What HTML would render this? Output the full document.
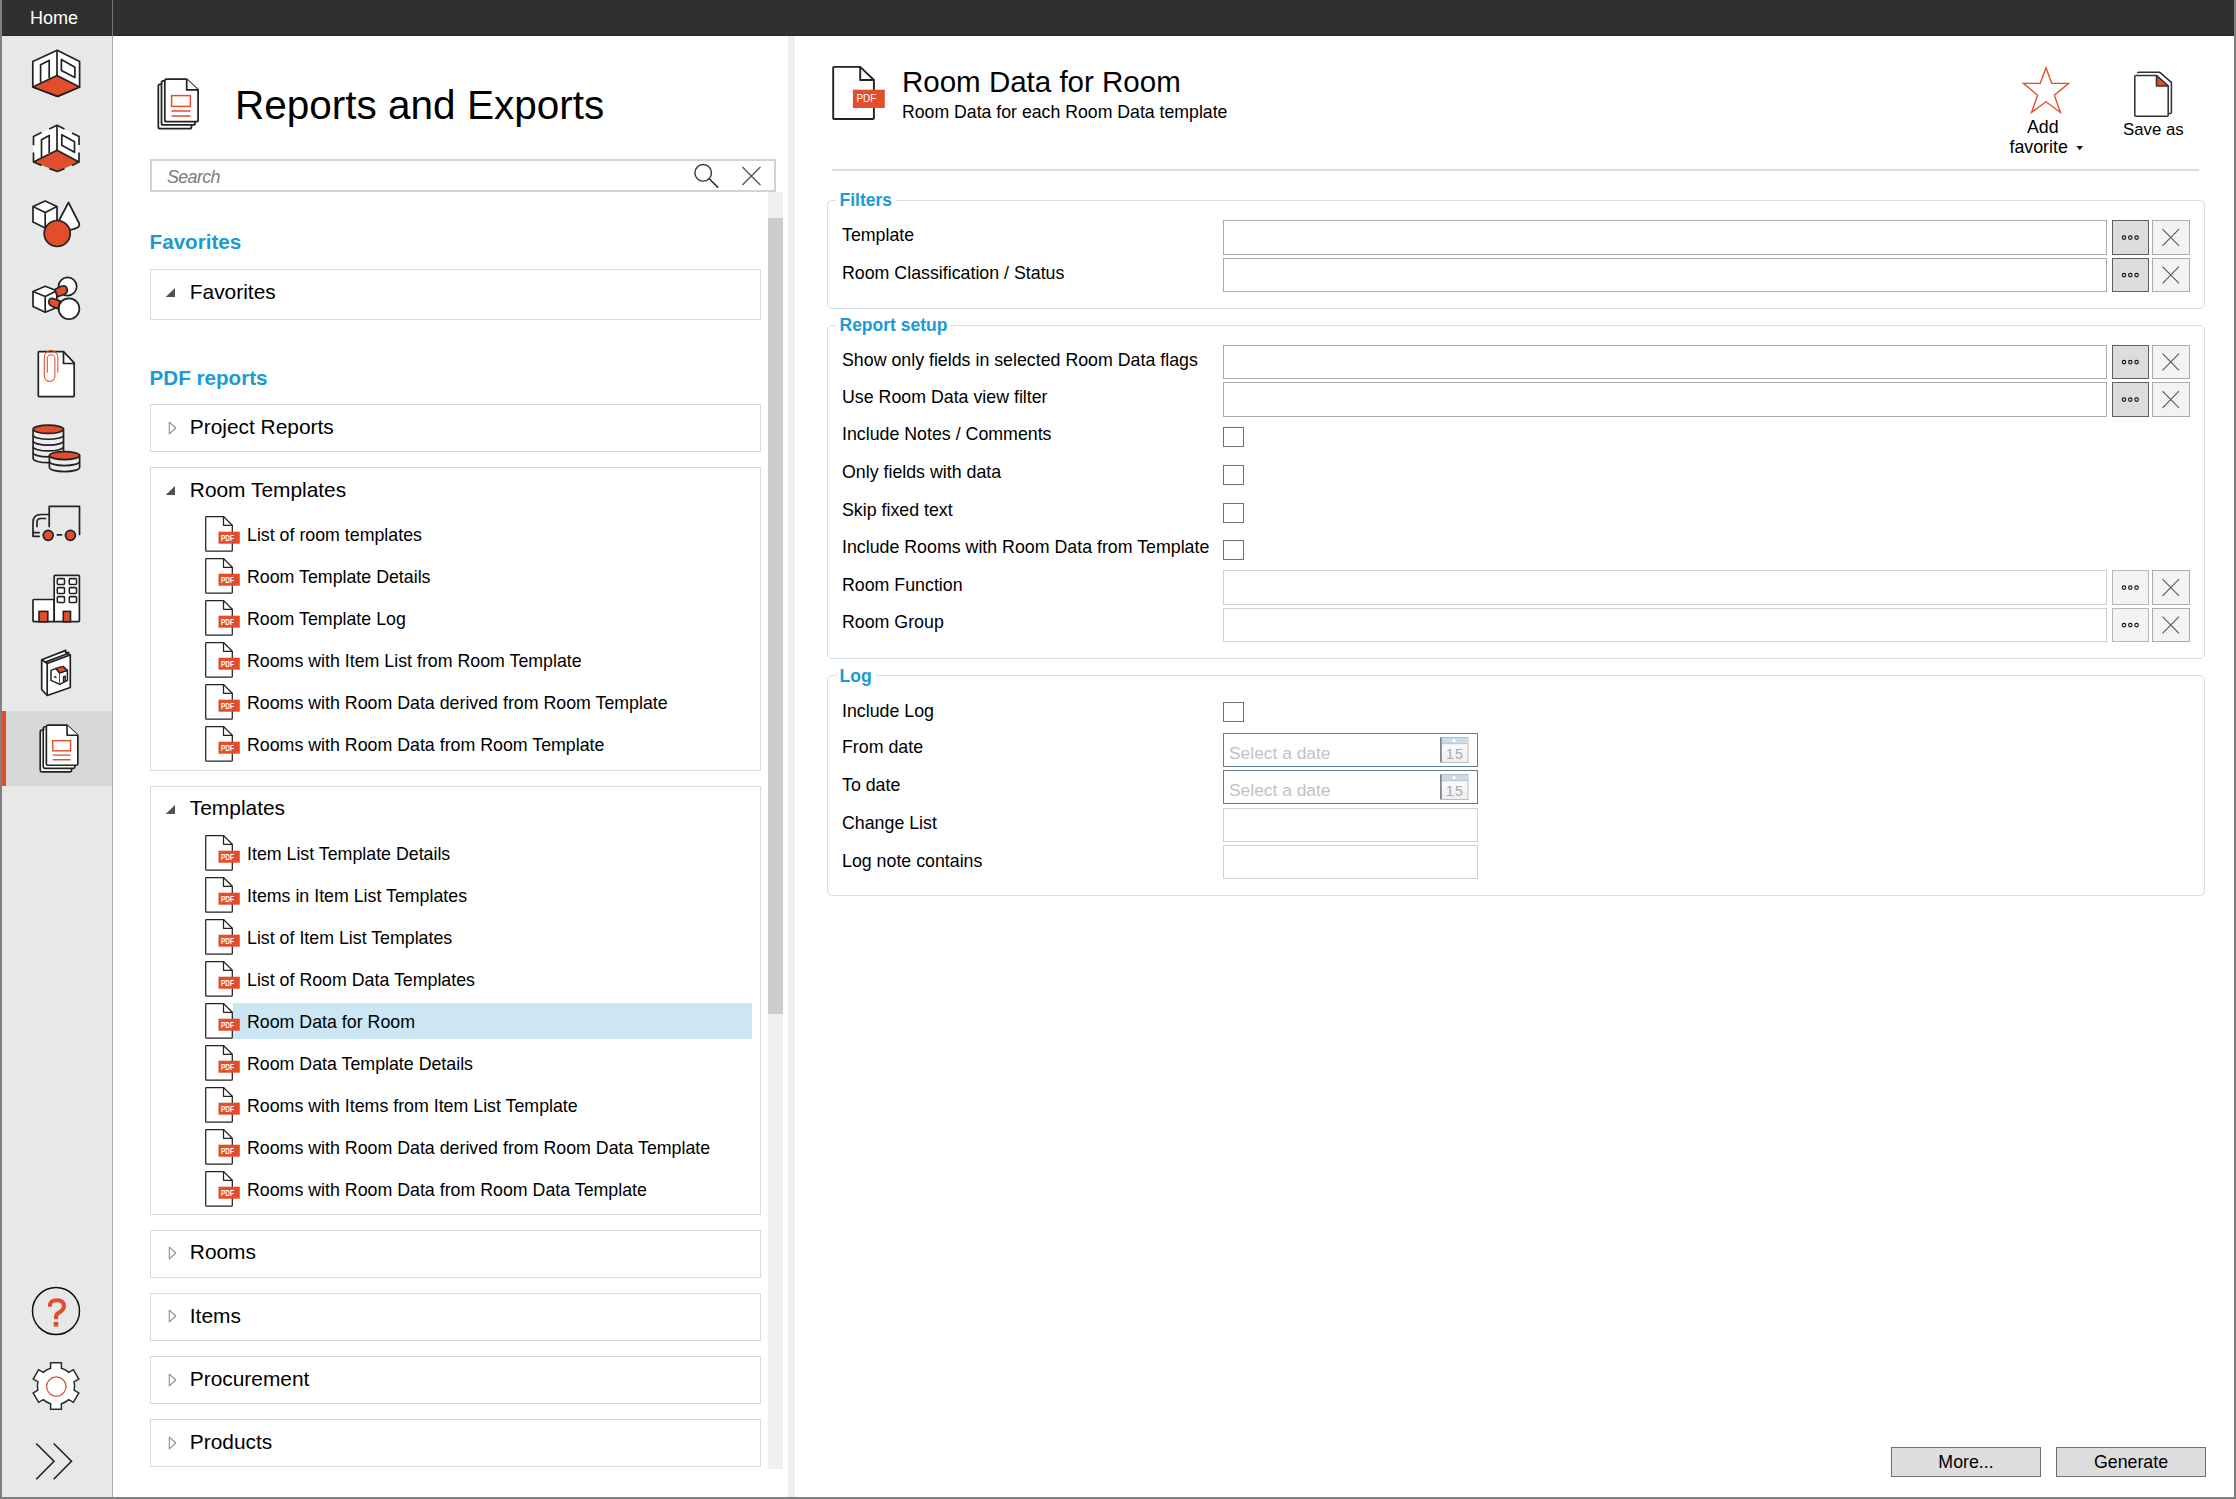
<!DOCTYPE html>
<html><head><meta charset="utf-8"><style>
*{box-sizing:border-box;margin:0;padding:0}
html,body{width:2236px;height:1499px;overflow:hidden;background:#fff;font-family:"Liberation Sans",sans-serif;color:#000}
.a{position:absolute}
.t{position:absolute;line-height:1;white-space:nowrap}
svg{position:absolute;overflow:visible}
#bl{left:0;top:0;width:2px;height:1499px;background:#808080}
#br{left:2234px;top:0;width:2px;height:1499px;background:#808080}
#bb{left:0;top:1497px;width:2236px;height:2px;background:#808080}
#top{left:2px;top:0;width:2232px;height:36px;background:#303030}
#side{left:2px;top:36px;width:110px;height:1461px;background:#e7e8e8}
#sline{left:112px;top:0;width:1px;height:1497px;background:#a9a9a9}
#split{left:788px;top:36px;width:7px;height:1461px;background:#f0f0f0}
.gbox{position:absolute;left:150px;width:611px;border:1px solid #dadada;background:#fff}
.sec{font-weight:bold;color:#1a9ad6}
.blue{color:#1a9ad6;font-weight:bold}
.inp{position:absolute;left:1223px;width:884px;border:1px solid #a9abae;background:#fff}
.inp.dis{border-color:#cfd0d2}
.bd{position:absolute;left:2112px;width:37px;border:1px solid #5f5f5f;background:#dcdcdc}
.bd.dis{border-color:#b5b8bb;background:#f3f3f3}
.bx{position:absolute;left:2152px;width:38px;border:1px solid #a9adb1;background:#f3f3f3}
.cb{position:absolute;left:1223px;width:21px;height:20px;border:1.5px solid #707070;background:#fff}
.fs{position:absolute;left:827px;width:1378px;border:1.5px solid #d3dde4;border-radius:5px}
</style></head><body>
<div id="bl" class="a"></div><div id="br" class="a"></div><div id="bb" class="a"></div>
<div id="top" class="a"></div><div id="side" class="a"></div><div id="sline" class="a"></div><div id="split" class="a"></div>
<div class="a" style="left:2px;top:35px;width:2232px;height:1px;background:#262626"></div>
<div class="t " style="left:30px;top:9.1px;font-size:18px;color:#fff">Home</div>
<div class="a" style="left:112px;top:0;width:1px;height:36px;background:#767676"></div>
<div class="t " style="left:235px;top:84.7px;font-size:40.5px;">Reports and Exports</div>
<div class="a" style="left:150px;top:159px;width:625.5px;height:33px;border:2px solid #d3d3d3"></div>
<div class="t " style="left:167px;top:167.8px;font-size:18px;font-style:italic;color:#7d7d7d;letter-spacing:-0.7px">Search</div>
<div class="a" style="left:768px;top:192px;width:15px;height:1277px;background:#f0f0f0"></div>
<div class="a" style="left:768px;top:218px;width:15px;height:796px;background:#cdcdcd"></div>
<div class="t blue" style="left:149.6px;top:232.2px;font-size:20.6px;">Favorites</div>
<div class="gbox" style="top:269px;height:51px"></div>
<div class="t " style="left:189.8px;top:282.3px;font-size:20.9px;">Favorites</div>
<div class="t blue" style="left:149.6px;top:368.1px;font-size:20.6px;">PDF reports</div>
<div class="gbox" style="top:404px;height:48px"></div>
<div class="t " style="left:189.8px;top:417.1px;font-size:20.9px;">Project Reports</div>
<div class="gbox" style="top:467px;height:304px"></div>
<div class="t " style="left:189.8px;top:480.3px;font-size:20.9px;">Room Templates</div>
<div class="t " style="left:247px;top:526.9px;font-size:17.8px;">List of room templates</div>
<div class="t " style="left:247px;top:568.9px;font-size:17.8px;">Room Template Details</div>
<div class="t " style="left:247px;top:610.9px;font-size:17.8px;">Room Template Log</div>
<div class="t " style="left:247px;top:652.9px;font-size:17.8px;">Rooms with Item List from Room Template</div>
<div class="t " style="left:247px;top:694.9px;font-size:17.8px;">Rooms with Room Data derived from Room Template</div>
<div class="t " style="left:247px;top:736.9px;font-size:17.8px;">Rooms with Room Data from Room Template</div>
<div class="gbox" style="top:786px;height:429px"></div>
<div class="a" style="left:233px;top:1003px;width:519px;height:36px;background:#cce6f4"></div>
<div class="t " style="left:189.8px;top:798.3px;font-size:20.9px;">Templates</div>
<div class="t " style="left:247px;top:845.9px;font-size:17.8px;">Item List Template Details</div>
<div class="t " style="left:247px;top:887.9px;font-size:17.8px;">Items in Item List Templates</div>
<div class="t " style="left:247px;top:929.9px;font-size:17.8px;">List of Item List Templates</div>
<div class="t " style="left:247px;top:971.9px;font-size:17.8px;">List of Room Data Templates</div>
<div class="t " style="left:247px;top:1013.9px;font-size:17.8px;">Room Data for Room</div>
<div class="t " style="left:247px;top:1055.9px;font-size:17.8px;">Room Data Template Details</div>
<div class="t " style="left:247px;top:1097.9px;font-size:17.8px;">Rooms with Items from Item List Template</div>
<div class="t " style="left:247px;top:1139.9px;font-size:17.8px;">Rooms with Room Data derived from Room Data Template</div>
<div class="t " style="left:247px;top:1181.9px;font-size:17.8px;">Rooms with Room Data from Room Data Template</div>
<div class="gbox" style="top:1230px;height:48px"></div>
<div class="t " style="left:189.8px;top:1241.8px;font-size:20.9px;">Rooms</div>
<div class="gbox" style="top:1293px;height:48px"></div>
<div class="t " style="left:189.8px;top:1305.5px;font-size:20.9px;">Items</div>
<div class="gbox" style="top:1356px;height:48px"></div>
<div class="t " style="left:189.8px;top:1368.9px;font-size:20.9px;">Procurement</div>
<div class="gbox" style="top:1419px;height:48px"></div>
<div class="t " style="left:189.8px;top:1431.7px;font-size:20.9px;">Products</div>
<div class="t " style="left:902px;top:66.6px;font-size:29.5px;">Room Data for Room</div>
<div class="t " style="left:902px;top:103.8px;font-size:17.7px;">Room Data for each Room Data template</div>
<div class="a" style="left:832px;top:169px;width:1367px;height:2px;background:#dcdcdc"></div>
<div class="t " style="left:2027px;top:119.3px;font-size:17.8px;">Add</div>
<div class="t " style="left:2009.5px;top:138.9px;font-size:17.8px;">favorite</div>
<div class="t " style="left:2123px;top:122.2px;font-size:16.8px;">Save as</div>
<div class="fs" style="top:200px;height:109px"></div>
<div class="fs" style="top:325px;height:334px"></div>
<div class="fs" style="top:675px;height:221px"></div>
<div class="a" style="left:836px;top:187px;width:60px;height:24px;background:#fff"></div>
<div class="t sec" style="left:839.5px;top:192.2px;font-size:17.5px;">Filters</div>
<div class="a" style="left:836px;top:312px;width:114px;height:24px;background:#fff"></div>
<div class="t sec" style="left:839.5px;top:317.2px;font-size:17.5px;">Report setup</div>
<div class="a" style="left:836px;top:662.6px;width:40px;height:24px;background:#fff"></div>
<div class="t sec" style="left:839.5px;top:667.8px;font-size:17.5px;">Log</div>
<div class="t " style="left:842px;top:227.1px;font-size:17.8px;">Template</div>
<div class="t " style="left:842px;top:265.1px;font-size:17.8px;">Room Classification / Status</div>
<div class="t " style="left:842px;top:351.7px;font-size:17.8px;">Show only fields in selected Room Data flags</div>
<div class="t " style="left:842px;top:389.2px;font-size:17.8px;">Use Room Data view filter</div>
<div class="t " style="left:842px;top:426.2px;font-size:17.8px;">Include Notes / Comments</div>
<div class="t " style="left:842px;top:463.8px;font-size:17.8px;">Only fields with data</div>
<div class="t " style="left:842px;top:501.9px;font-size:17.8px;">Skip fixed text</div>
<div class="t " style="left:842px;top:539.3px;font-size:17.8px;">Include Rooms with Room Data from Template</div>
<div class="t " style="left:842px;top:576.8px;font-size:17.8px;">Room Function</div>
<div class="t " style="left:842px;top:614.4px;font-size:17.8px;">Room Group</div>
<div class="t " style="left:842px;top:702.7px;font-size:17.8px;">Include Log</div>
<div class="t " style="left:842px;top:739.2px;font-size:17.8px;">From date</div>
<div class="t " style="left:842px;top:777.3px;font-size:17.8px;">To date</div>
<div class="t " style="left:842px;top:814.7px;font-size:17.8px;">Change List</div>
<div class="t " style="left:842px;top:852.7px;font-size:17.8px;">Log note contains</div>
<div class="inp" style="top:220px;height:35px"></div>
<div class="bd" style="top:220px;height:35px"></div>
<div class="bx" style="top:220px;height:35px"></div>
<div class="inp" style="top:258px;height:34px"></div>
<div class="bd" style="top:258px;height:34px"></div>
<div class="bx" style="top:258px;height:34px"></div>
<div class="inp" style="top:345px;height:34px"></div>
<div class="bd" style="top:345px;height:34px"></div>
<div class="bx" style="top:345px;height:34px"></div>
<div class="inp" style="top:382px;height:35px"></div>
<div class="bd" style="top:382px;height:35px"></div>
<div class="bx" style="top:382px;height:35px"></div>
<div class="inp dis" style="top:570px;height:35px"></div>
<div class="bd dis" style="top:570px;height:35px"></div>
<div class="bx" style="top:570px;height:35px"></div>
<div class="inp dis" style="top:608px;height:34px"></div>
<div class="bd dis" style="top:608px;height:34px"></div>
<div class="bx" style="top:608px;height:34px"></div>
<div class="cb" style="top:427px"></div>
<div class="cb" style="top:465px"></div>
<div class="cb" style="top:503px"></div>
<div class="cb" style="top:540px"></div>
<div class="cb" style="top:702px"></div>
<div class="a" style="left:1223px;top:733px;width:255px;height:34px;border:1.5px solid #647a8e;background:#fff"></div>
<div class="t " style="left:1229px;top:744.5px;font-size:17.4px;color:#c2c2c2">Select a date</div>
<div class="a" style="left:1223px;top:770px;width:255px;height:34px;border:1.5px solid #647a8e;background:#fff"></div>
<div class="t " style="left:1229px;top:781.5px;font-size:17.4px;color:#c2c2c2">Select a date</div>
<div class="a" style="left:1223px;top:808px;width:255px;height:34px;border:1px solid #cfd0d2;background:#fff"></div>
<div class="a" style="left:1223px;top:845px;width:255px;height:34px;border:1px solid #cfd0d2;background:#fff"></div>
<div class="a" style="left:1891px;top:1447px;width:150px;height:30px;border:1px solid #707070;background:#dddddd"></div>
<div class="t" style="left:1891px;top:1453.5px;width:150px;text-align:center;font-size:17.8px">More...</div>
<div class="a" style="left:2056px;top:1447px;width:150px;height:30px;border:1px solid #707070;background:#dddddd"></div>
<div class="t" style="left:2056px;top:1453.5px;width:150px;text-align:center;font-size:17.8px">Generate</div>
<svg style="left:157px;top:78px" width="46" height="54" viewBox="0 0 46 54" ><g transform="scale(1.0)"><path d="M1.3,8.0 Q1.3,6.3 3,6.3 H6 M1.3,8 V48.9 Q1.3,50.6 3,50.6 H32.8 Q34.5,50.6 34.5,48.9 V47" fill="#fff" stroke="#222" stroke-width="1.75" stroke-linejoin="round"/><path d="M4.5,4.6 Q4.5,2.9 6.2,2.9 H8 M4.5,4.6 V45.2 Q4.5,46.9 6.2,46.9 H36.3 Q38,46.9 38,45.2 V43.8" fill="#fff" stroke="#222" stroke-width="1.75" stroke-linejoin="round"/><path d="M7.8,2.9 Q7.8,1.2 9.5,1.2 H29.7 L41.1,11.9 V42 Q41.1,43.7 39.4,43.7 H9.5 Q7.8,43.7 7.8,42 Z" fill="#fff" stroke="#222" stroke-width="1.75" stroke-linejoin="round"/><path d="M29.7,1.2 V11.9 H41.1" fill="#fff" stroke="#222" stroke-width="1.75" stroke-linejoin="round"/><rect x="14.6" y="17.6" width="18.8" height="10.8" fill="none" stroke="#e24e2b" stroke-width="1.5"/><path d="M14.5,32.9 H33.5 M14.5,37.9 H33.5" stroke="#e24e2b" stroke-width="1.5"/></g></svg>
<svg style="left:0px;top:0px" width="800" height="200" viewBox="0 0 800 200" ><circle cx="703.2" cy="172.8" r="8.3" fill="none" stroke="#333" stroke-width="1.4"/><path d="M709.2,178.8 L718.2,187.6" stroke="#333" stroke-width="1.6"/><path d="M742.4,167 L760.4,185 M760.4,167 L742.4,185" stroke="#4a4a4a" stroke-width="1.1"/></svg>
<svg style="left:160px;top:285px" width="20" height="16"><path d="M15,3 V12 H5.7 Z" fill="#505050"/></svg>
<svg style="left:160px;top:483px" width="20" height="16"><path d="M15,3 V12 H5.7 Z" fill="#505050"/></svg>
<svg style="left:160px;top:802px" width="20" height="16"><path d="M15,3 V12 H5.7 Z" fill="#505050"/></svg>
<svg style="left:160px;top:417.5px" width="20" height="20"><path d="M9.3,4.2 L15.8,10 L9.3,15.8 Z" fill="#fff" stroke="#8c8c8c" stroke-width="1.1" stroke-linejoin="round"/></svg>
<svg style="left:160px;top:1243px" width="20" height="20"><path d="M9.3,4.2 L15.8,10 L9.3,15.8 Z" fill="#fff" stroke="#8c8c8c" stroke-width="1.1" stroke-linejoin="round"/></svg>
<svg style="left:160px;top:1306px" width="20" height="20"><path d="M9.3,4.2 L15.8,10 L9.3,15.8 Z" fill="#fff" stroke="#8c8c8c" stroke-width="1.1" stroke-linejoin="round"/></svg>
<svg style="left:160px;top:1369.8px" width="20" height="20"><path d="M9.3,4.2 L15.8,10 L9.3,15.8 Z" fill="#fff" stroke="#8c8c8c" stroke-width="1.1" stroke-linejoin="round"/></svg>
<svg style="left:160px;top:1432.6px" width="20" height="20"><path d="M9.3,4.2 L15.8,10 L9.3,15.8 Z" fill="#fff" stroke="#8c8c8c" stroke-width="1.1" stroke-linejoin="round"/></svg>
<svg style="left:200px;top:509.5px" width="44" height="46" viewBox="0 0 44 46" ><path d="M5.7,7.3 Q5.7,6.5 6.5,6.5 H23.5 L32.3,15.3 V40.4 Q32.3,41.2 31.5,41.2 H6.5 Q5.7,41.2 5.7,40.4 Z" fill="#fff" stroke="#222" stroke-width="1.25" stroke-linejoin="round"/><path d="M23.5,6.5 V15.3 H32.3" fill="none" stroke="#222" stroke-width="1.25" stroke-linejoin="round"/><rect x="18.5" y="21.7" width="21.3" height="12" fill="#e24e2b"/><text x="21" y="31" font-family="Liberation Sans" font-size="8.6" font-weight="bold" fill="#fff" textLength="13" lengthAdjust="spacingAndGlyphs">PDF</text></svg>
<svg style="left:200px;top:551.5px" width="44" height="46" viewBox="0 0 44 46" ><path d="M5.7,7.3 Q5.7,6.5 6.5,6.5 H23.5 L32.3,15.3 V40.4 Q32.3,41.2 31.5,41.2 H6.5 Q5.7,41.2 5.7,40.4 Z" fill="#fff" stroke="#222" stroke-width="1.25" stroke-linejoin="round"/><path d="M23.5,6.5 V15.3 H32.3" fill="none" stroke="#222" stroke-width="1.25" stroke-linejoin="round"/><rect x="18.5" y="21.7" width="21.3" height="12" fill="#e24e2b"/><text x="21" y="31" font-family="Liberation Sans" font-size="8.6" font-weight="bold" fill="#fff" textLength="13" lengthAdjust="spacingAndGlyphs">PDF</text></svg>
<svg style="left:200px;top:593.5px" width="44" height="46" viewBox="0 0 44 46" ><path d="M5.7,7.3 Q5.7,6.5 6.5,6.5 H23.5 L32.3,15.3 V40.4 Q32.3,41.2 31.5,41.2 H6.5 Q5.7,41.2 5.7,40.4 Z" fill="#fff" stroke="#222" stroke-width="1.25" stroke-linejoin="round"/><path d="M23.5,6.5 V15.3 H32.3" fill="none" stroke="#222" stroke-width="1.25" stroke-linejoin="round"/><rect x="18.5" y="21.7" width="21.3" height="12" fill="#e24e2b"/><text x="21" y="31" font-family="Liberation Sans" font-size="8.6" font-weight="bold" fill="#fff" textLength="13" lengthAdjust="spacingAndGlyphs">PDF</text></svg>
<svg style="left:200px;top:635.5px" width="44" height="46" viewBox="0 0 44 46" ><path d="M5.7,7.3 Q5.7,6.5 6.5,6.5 H23.5 L32.3,15.3 V40.4 Q32.3,41.2 31.5,41.2 H6.5 Q5.7,41.2 5.7,40.4 Z" fill="#fff" stroke="#222" stroke-width="1.25" stroke-linejoin="round"/><path d="M23.5,6.5 V15.3 H32.3" fill="none" stroke="#222" stroke-width="1.25" stroke-linejoin="round"/><rect x="18.5" y="21.7" width="21.3" height="12" fill="#e24e2b"/><text x="21" y="31" font-family="Liberation Sans" font-size="8.6" font-weight="bold" fill="#fff" textLength="13" lengthAdjust="spacingAndGlyphs">PDF</text></svg>
<svg style="left:200px;top:677.5px" width="44" height="46" viewBox="0 0 44 46" ><path d="M5.7,7.3 Q5.7,6.5 6.5,6.5 H23.5 L32.3,15.3 V40.4 Q32.3,41.2 31.5,41.2 H6.5 Q5.7,41.2 5.7,40.4 Z" fill="#fff" stroke="#222" stroke-width="1.25" stroke-linejoin="round"/><path d="M23.5,6.5 V15.3 H32.3" fill="none" stroke="#222" stroke-width="1.25" stroke-linejoin="round"/><rect x="18.5" y="21.7" width="21.3" height="12" fill="#e24e2b"/><text x="21" y="31" font-family="Liberation Sans" font-size="8.6" font-weight="bold" fill="#fff" textLength="13" lengthAdjust="spacingAndGlyphs">PDF</text></svg>
<svg style="left:200px;top:719.5px" width="44" height="46" viewBox="0 0 44 46" ><path d="M5.7,7.3 Q5.7,6.5 6.5,6.5 H23.5 L32.3,15.3 V40.4 Q32.3,41.2 31.5,41.2 H6.5 Q5.7,41.2 5.7,40.4 Z" fill="#fff" stroke="#222" stroke-width="1.25" stroke-linejoin="round"/><path d="M23.5,6.5 V15.3 H32.3" fill="none" stroke="#222" stroke-width="1.25" stroke-linejoin="round"/><rect x="18.5" y="21.7" width="21.3" height="12" fill="#e24e2b"/><text x="21" y="31" font-family="Liberation Sans" font-size="8.6" font-weight="bold" fill="#fff" textLength="13" lengthAdjust="spacingAndGlyphs">PDF</text></svg>
<svg style="left:200px;top:828.8px" width="44" height="46" viewBox="0 0 44 46" ><path d="M5.7,7.3 Q5.7,6.5 6.5,6.5 H23.5 L32.3,15.3 V40.4 Q32.3,41.2 31.5,41.2 H6.5 Q5.7,41.2 5.7,40.4 Z" fill="#fff" stroke="#222" stroke-width="1.25" stroke-linejoin="round"/><path d="M23.5,6.5 V15.3 H32.3" fill="none" stroke="#222" stroke-width="1.25" stroke-linejoin="round"/><rect x="18.5" y="21.7" width="21.3" height="12" fill="#e24e2b"/><text x="21" y="31" font-family="Liberation Sans" font-size="8.6" font-weight="bold" fill="#fff" textLength="13" lengthAdjust="spacingAndGlyphs">PDF</text></svg>
<svg style="left:200px;top:870.8px" width="44" height="46" viewBox="0 0 44 46" ><path d="M5.7,7.3 Q5.7,6.5 6.5,6.5 H23.5 L32.3,15.3 V40.4 Q32.3,41.2 31.5,41.2 H6.5 Q5.7,41.2 5.7,40.4 Z" fill="#fff" stroke="#222" stroke-width="1.25" stroke-linejoin="round"/><path d="M23.5,6.5 V15.3 H32.3" fill="none" stroke="#222" stroke-width="1.25" stroke-linejoin="round"/><rect x="18.5" y="21.7" width="21.3" height="12" fill="#e24e2b"/><text x="21" y="31" font-family="Liberation Sans" font-size="8.6" font-weight="bold" fill="#fff" textLength="13" lengthAdjust="spacingAndGlyphs">PDF</text></svg>
<svg style="left:200px;top:912.8px" width="44" height="46" viewBox="0 0 44 46" ><path d="M5.7,7.3 Q5.7,6.5 6.5,6.5 H23.5 L32.3,15.3 V40.4 Q32.3,41.2 31.5,41.2 H6.5 Q5.7,41.2 5.7,40.4 Z" fill="#fff" stroke="#222" stroke-width="1.25" stroke-linejoin="round"/><path d="M23.5,6.5 V15.3 H32.3" fill="none" stroke="#222" stroke-width="1.25" stroke-linejoin="round"/><rect x="18.5" y="21.7" width="21.3" height="12" fill="#e24e2b"/><text x="21" y="31" font-family="Liberation Sans" font-size="8.6" font-weight="bold" fill="#fff" textLength="13" lengthAdjust="spacingAndGlyphs">PDF</text></svg>
<svg style="left:200px;top:954.8px" width="44" height="46" viewBox="0 0 44 46" ><path d="M5.7,7.3 Q5.7,6.5 6.5,6.5 H23.5 L32.3,15.3 V40.4 Q32.3,41.2 31.5,41.2 H6.5 Q5.7,41.2 5.7,40.4 Z" fill="#fff" stroke="#222" stroke-width="1.25" stroke-linejoin="round"/><path d="M23.5,6.5 V15.3 H32.3" fill="none" stroke="#222" stroke-width="1.25" stroke-linejoin="round"/><rect x="18.5" y="21.7" width="21.3" height="12" fill="#e24e2b"/><text x="21" y="31" font-family="Liberation Sans" font-size="8.6" font-weight="bold" fill="#fff" textLength="13" lengthAdjust="spacingAndGlyphs">PDF</text></svg>
<svg style="left:200px;top:996.8px" width="44" height="46" viewBox="0 0 44 46" ><path d="M5.7,7.3 Q5.7,6.5 6.5,6.5 H23.5 L32.3,15.3 V40.4 Q32.3,41.2 31.5,41.2 H6.5 Q5.7,41.2 5.7,40.4 Z" fill="#fff" stroke="#222" stroke-width="1.25" stroke-linejoin="round"/><path d="M23.5,6.5 V15.3 H32.3" fill="none" stroke="#222" stroke-width="1.25" stroke-linejoin="round"/><rect x="18.5" y="21.7" width="21.3" height="12" fill="#e24e2b"/><text x="21" y="31" font-family="Liberation Sans" font-size="8.6" font-weight="bold" fill="#fff" textLength="13" lengthAdjust="spacingAndGlyphs">PDF</text></svg>
<svg style="left:200px;top:1038.8px" width="44" height="46" viewBox="0 0 44 46" ><path d="M5.7,7.3 Q5.7,6.5 6.5,6.5 H23.5 L32.3,15.3 V40.4 Q32.3,41.2 31.5,41.2 H6.5 Q5.7,41.2 5.7,40.4 Z" fill="#fff" stroke="#222" stroke-width="1.25" stroke-linejoin="round"/><path d="M23.5,6.5 V15.3 H32.3" fill="none" stroke="#222" stroke-width="1.25" stroke-linejoin="round"/><rect x="18.5" y="21.7" width="21.3" height="12" fill="#e24e2b"/><text x="21" y="31" font-family="Liberation Sans" font-size="8.6" font-weight="bold" fill="#fff" textLength="13" lengthAdjust="spacingAndGlyphs">PDF</text></svg>
<svg style="left:200px;top:1080.8px" width="44" height="46" viewBox="0 0 44 46" ><path d="M5.7,7.3 Q5.7,6.5 6.5,6.5 H23.5 L32.3,15.3 V40.4 Q32.3,41.2 31.5,41.2 H6.5 Q5.7,41.2 5.7,40.4 Z" fill="#fff" stroke="#222" stroke-width="1.25" stroke-linejoin="round"/><path d="M23.5,6.5 V15.3 H32.3" fill="none" stroke="#222" stroke-width="1.25" stroke-linejoin="round"/><rect x="18.5" y="21.7" width="21.3" height="12" fill="#e24e2b"/><text x="21" y="31" font-family="Liberation Sans" font-size="8.6" font-weight="bold" fill="#fff" textLength="13" lengthAdjust="spacingAndGlyphs">PDF</text></svg>
<svg style="left:200px;top:1122.8px" width="44" height="46" viewBox="0 0 44 46" ><path d="M5.7,7.3 Q5.7,6.5 6.5,6.5 H23.5 L32.3,15.3 V40.4 Q32.3,41.2 31.5,41.2 H6.5 Q5.7,41.2 5.7,40.4 Z" fill="#fff" stroke="#222" stroke-width="1.25" stroke-linejoin="round"/><path d="M23.5,6.5 V15.3 H32.3" fill="none" stroke="#222" stroke-width="1.25" stroke-linejoin="round"/><rect x="18.5" y="21.7" width="21.3" height="12" fill="#e24e2b"/><text x="21" y="31" font-family="Liberation Sans" font-size="8.6" font-weight="bold" fill="#fff" textLength="13" lengthAdjust="spacingAndGlyphs">PDF</text></svg>
<svg style="left:200px;top:1164.8px" width="44" height="46" viewBox="0 0 44 46" ><path d="M5.7,7.3 Q5.7,6.5 6.5,6.5 H23.5 L32.3,15.3 V40.4 Q32.3,41.2 31.5,41.2 H6.5 Q5.7,41.2 5.7,40.4 Z" fill="#fff" stroke="#222" stroke-width="1.25" stroke-linejoin="round"/><path d="M23.5,6.5 V15.3 H32.3" fill="none" stroke="#222" stroke-width="1.25" stroke-linejoin="round"/><rect x="18.5" y="21.7" width="21.3" height="12" fill="#e24e2b"/><text x="21" y="31" font-family="Liberation Sans" font-size="8.6" font-weight="bold" fill="#fff" textLength="13" lengthAdjust="spacingAndGlyphs">PDF</text></svg>
<svg style="left:832px;top:65px" width="56" height="58" viewBox="0 0 56 58" ><path d="M1.2,2.9 Q1.2,1.9 2.2,1.9 H28.2 L41.9,15 V53 Q41.9,54 40.9,54 H2.2 Q1.2,54 1.2,53 Z" fill="#fff" stroke="#222" stroke-width="1.9" stroke-linejoin="round"/><path d="M28.2,1.9 V15 H41.9" fill="none" stroke="#222" stroke-width="1.9" stroke-linejoin="round"/><rect x="20.9" y="24.7" width="31.9" height="18.3" fill="#e24e2b"/><text x="24.4" y="36.7" font-family="Liberation Sans" font-size="11.6" fill="#fff" textLength="19.8" lengthAdjust="spacingAndGlyphs">PDF</text></svg>
<svg style="left:0px;top:0px" width="2236" height="200" viewBox="0 0 2236 200" ><polygon points="2046.00,67.80 2051.69,83.33 2068.58,83.33 2054.40,95.20 2060.47,112.48 2046.00,101.76 2031.53,112.48 2037.60,95.20 2023.42,83.33 2040.31,83.33" fill="none" stroke="#e24e2b" stroke-width="1.35" stroke-linejoin="miter"/><path d="M2076.4,146 H2083 L2079.7,150.2 Z" fill="#111"/></svg>
<svg style="left:0px;top:0px" width="2236" height="200" viewBox="0 0 2236 200" ><path d="M2137.6,73.3 Q2137.6,72.3 2138.6,72.3 H2159.8 L2171.4,82.4 V112.4 Q2171.4,113.4 2170.4,113.4 H2167" fill="#fff" stroke="#333" stroke-width="1.55" stroke-linejoin="round"/><path d="M2134.8,76.5 Q2134.8,75.5 2135.8,75.5 H2156.5 L2168.2,86 V115.2 Q2168.2,116.2 2167.2,116.2 H2135.8 Q2134.8,116.2 2134.8,115.2 Z" fill="#fff" stroke="#333" stroke-width="1.55" stroke-linejoin="round"/><path d="M2156.5,75.5 L2168.2,86 H2156.5 Z" fill="#e24e2b" stroke="#333" stroke-width="1.55" stroke-linejoin="round"/></svg>
<svg style="left:2112px;top:220px" width="37" height="35" viewBox="0 0 37 35" ><circle cx="12" cy="17.6" r="1.75" fill="none" stroke="#111" stroke-width="1.05"/><circle cx="18.3" cy="17.6" r="1.75" fill="none" stroke="#111" stroke-width="1.05"/><circle cx="24.6" cy="17.6" r="1.75" fill="none" stroke="#111" stroke-width="1.05"/></svg>
<svg style="left:2152px;top:220px" width="38" height="35" viewBox="0 0 38 35" ><path d="M10.5,9.2 L27,25.8 M27,9.2 L10.5,25.8" stroke="#555" stroke-width="1.05"/></svg>
<svg style="left:2112px;top:258px" width="37" height="34" viewBox="0 0 37 34" ><circle cx="12" cy="17.1" r="1.75" fill="none" stroke="#111" stroke-width="1.05"/><circle cx="18.3" cy="17.1" r="1.75" fill="none" stroke="#111" stroke-width="1.05"/><circle cx="24.6" cy="17.1" r="1.75" fill="none" stroke="#111" stroke-width="1.05"/></svg>
<svg style="left:2152px;top:258px" width="38" height="34" viewBox="0 0 38 34" ><path d="M10.5,8.7 L27,25.3 M27,8.7 L10.5,25.3" stroke="#555" stroke-width="1.05"/></svg>
<svg style="left:2112px;top:345px" width="37" height="34" viewBox="0 0 37 34" ><circle cx="12" cy="17.1" r="1.75" fill="none" stroke="#111" stroke-width="1.05"/><circle cx="18.3" cy="17.1" r="1.75" fill="none" stroke="#111" stroke-width="1.05"/><circle cx="24.6" cy="17.1" r="1.75" fill="none" stroke="#111" stroke-width="1.05"/></svg>
<svg style="left:2152px;top:345px" width="38" height="34" viewBox="0 0 38 34" ><path d="M10.5,8.7 L27,25.3 M27,8.7 L10.5,25.3" stroke="#555" stroke-width="1.05"/></svg>
<svg style="left:2112px;top:382px" width="37" height="35" viewBox="0 0 37 35" ><circle cx="12" cy="17.6" r="1.75" fill="none" stroke="#111" stroke-width="1.05"/><circle cx="18.3" cy="17.6" r="1.75" fill="none" stroke="#111" stroke-width="1.05"/><circle cx="24.6" cy="17.6" r="1.75" fill="none" stroke="#111" stroke-width="1.05"/></svg>
<svg style="left:2152px;top:382px" width="38" height="35" viewBox="0 0 38 35" ><path d="M10.5,9.2 L27,25.8 M27,9.2 L10.5,25.8" stroke="#555" stroke-width="1.05"/></svg>
<svg style="left:2112px;top:570px" width="37" height="35" viewBox="0 0 37 35" ><circle cx="12" cy="17.6" r="1.75" fill="none" stroke="#111" stroke-width="1.05"/><circle cx="18.3" cy="17.6" r="1.75" fill="none" stroke="#111" stroke-width="1.05"/><circle cx="24.6" cy="17.6" r="1.75" fill="none" stroke="#111" stroke-width="1.05"/></svg>
<svg style="left:2152px;top:570px" width="38" height="35" viewBox="0 0 38 35" ><path d="M10.5,9.2 L27,25.8 M27,9.2 L10.5,25.8" stroke="#555" stroke-width="1.05"/></svg>
<svg style="left:2112px;top:608px" width="37" height="34" viewBox="0 0 37 34" ><circle cx="12" cy="17.1" r="1.75" fill="none" stroke="#111" stroke-width="1.05"/><circle cx="18.3" cy="17.1" r="1.75" fill="none" stroke="#111" stroke-width="1.05"/><circle cx="24.6" cy="17.1" r="1.75" fill="none" stroke="#111" stroke-width="1.05"/></svg>
<svg style="left:2152px;top:608px" width="38" height="34" viewBox="0 0 38 34" ><path d="M10.5,8.7 L27,25.3 M27,8.7 L10.5,25.3" stroke="#555" stroke-width="1.05"/></svg>
<svg style="left:1439.5px;top:737.3px" width="30" height="28" viewBox="0 0 30 28" ><defs><linearGradient id="cg" x1="0" y1="0" x2="0" y2="1"><stop offset="0" stop-color="#fff"/><stop offset="1" stop-color="#eceef1"/></linearGradient></defs><rect x="1" y="0.5" width="27" height="25" fill="url(#cg)" stroke="#bcbcbc" stroke-width="1"/><rect x="1.5" y="1" width="26" height="5.6" fill="#c8dcef"/><path d="M1,6.7 H28" stroke="#c0c0c0" stroke-width="1"/><circle cx="14.1" cy="3.6" r="1.7" fill="#fff"/><path d="M0.9,0.5 V25.3" stroke="#555" stroke-width="1.1"/><text x="6" y="21.6" font-family="Liberation Sans" font-size="14" fill="#a9a9a9" letter-spacing="1.2">15</text></svg>
<svg style="left:1439.5px;top:774.3px" width="30" height="28" viewBox="0 0 30 28" ><defs><linearGradient id="cg" x1="0" y1="0" x2="0" y2="1"><stop offset="0" stop-color="#fff"/><stop offset="1" stop-color="#eceef1"/></linearGradient></defs><rect x="1" y="0.5" width="27" height="25" fill="url(#cg)" stroke="#bcbcbc" stroke-width="1"/><rect x="1.5" y="1" width="26" height="5.6" fill="#c8dcef"/><path d="M1,6.7 H28" stroke="#c0c0c0" stroke-width="1"/><circle cx="14.1" cy="3.6" r="1.7" fill="#fff"/><path d="M0.9,0.5 V25.3" stroke="#555" stroke-width="1.1"/><text x="6" y="21.6" font-family="Liberation Sans" font-size="14" fill="#a9a9a9" letter-spacing="1.2">15</text></svg>
<div class="a" style="left:2px;top:711px;width:110px;height:75px;background:#d7d8d8"></div>
<div class="a" style="left:2px;top:711px;width:4px;height:75px;background:#e24e2b"></div>
<svg style="left:26px;top:44px" width="60" height="60" viewBox="0 0 60 60" ><path d="M31.2,6.2 L53.6,17.6 V43 L31.6,52.4 L6.8,43 V17.6 Z" fill="#fff" stroke="#222" stroke-width="1.7" stroke-linejoin="round"/><path d="M6.8,43 L31,31.4 L53.6,43 L31.6,52.4 Z" fill="#e24e2b" stroke="#222" stroke-width="1.7" stroke-linejoin="round"/><path d="M31,6.2 V31.4" stroke="#222" stroke-width="1.7"/><path d="M14.6,38.8 V20.8 L23.2,16.4 V34.2" fill="none" stroke="#222" stroke-width="1.7" stroke-linejoin="round"/><path d="M35.4,15.6 L48.9,23.2 V33.4 L35.4,26.4 Z" fill="none" stroke="#222" stroke-width="1.7" stroke-linejoin="round"/></svg>
<svg style="left:26px;top:118px" width="60" height="60" viewBox="0 0 60 60" ><path d="M31,7.2 L53,18.5 V44 L31.5,53.5 L7.5,44 V18.5 Z" fill="#fff"/><path d="M7.5,44 L31,32.2 L53,44 L31.5,53.5 Z" fill="#e24e2b"/><path d="M7.5,44 L31,32.2 L53,44" fill="none" stroke="#222" stroke-width="1.7" stroke-linejoin="round"/><path d="M23.2,10.9 L31,7.2 L38.5,11 M15.5,14.6 L7.5,18.5 V27.2 M7.5,34.5 V44 L15.5,47.4 M23.5,50.6 L31.5,53.5 L38.5,50.6 M46,47.4 L53,44 V34.5 M53,27 V18.5 L46,15" fill="none" stroke="#222" stroke-width="1.7" stroke-linejoin="round"/><path d="M31,7.2 V32.2" stroke="#222" stroke-width="1.7"/><path d="M15.5,39.5 V21.8 L23.2,17.5 V35" fill="none" stroke="#222" stroke-width="1.7" stroke-linejoin="round"/><path d="M35.8,16.8 L48.5,23.8 V34.3 L35.8,27.3 Z" fill="none" stroke="#222" stroke-width="1.7" stroke-linejoin="round"/></svg>
<svg style="left:26px;top:192px" width="60" height="60" viewBox="0 0 60 60" ><path d="M7,14.5 L19.2,9 L31,14.5 V30 L19.2,36 L7,30 Z" fill="#fff" stroke="#222" stroke-width="1.7" stroke-linejoin="round"/><path d="M7,14.5 L19.2,20.5 L31,14.5 M19.2,20.5 V36" fill="none" stroke="#222" stroke-width="1.7" stroke-linejoin="round"/><path d="M42.5,10.5 L53.2,31.5 Q54.5,36.5 44,37.8 L33,28.5 Z" fill="#fff" stroke="#222" stroke-width="1.7" stroke-linejoin="round"/><circle cx="31.2" cy="41.5" r="13" fill="#e24e2b" stroke="#222" stroke-width="1.7"/></svg>
<svg style="left:26px;top:267px" width="60" height="60" viewBox="0 0 60 60" ><path d="M7,24.5 L19.2,19.3 L30.8,23.8 V40.5 L19.2,45.3 L7,39.5 Z" fill="#fff" stroke="#222" stroke-width="1.7" stroke-linejoin="round"/><path d="M7,24.5 L19.2,29.5 L30.8,23.8 M19.2,29.5 V45.3" fill="none" stroke="#222" stroke-width="1.7" stroke-linejoin="round"/><circle cx="41.6" cy="19.5" r="9.1" fill="#fff" stroke="#222" stroke-width="1.7"/><path d="M28.8,22.6 L35.2,19.2 Q39.8,17.6 41.2,22 Q42,25.6 38.5,27.2 L31.5,29.8 Z" fill="#e24e2b" stroke="#222" stroke-width="1.7" stroke-linejoin="round"/><circle cx="43" cy="41.8" r="10.4" fill="#fff" stroke="#222" stroke-width="1.7"/><path d="M34.8,34.4 L27.2,31.5 Q23,30.5 22.8,35 Q23,38.6 26.8,39.6 L32.8,42 Q32.2,37 34.8,34.4 Z" fill="#e24e2b" stroke="#222" stroke-width="1.7" stroke-linejoin="round"/></svg>
<svg style="left:26px;top:342px" width="60" height="60" viewBox="0 0 60 60" ><path d="M12.3,10.4 Q12.3,9.6 13.1,9.6 H37.5 L48.2,20.8 V53.8 Q48.2,54.6 47.4,54.6 H13.1 Q12.3,54.6 12.3,53.8 Z" fill="#fff" stroke="#222" stroke-width="1.7" stroke-linejoin="round"/><path d="M37.5,9.6 V21.5 H48.2" fill="none" stroke="#222" stroke-width="1.7" stroke-linejoin="round"/><path d="M21.3,30.2 V16.6 A3.8,3.8 0 0 1 28.9,16.6 V34.2 A5.3,5.3 0 0 1 18.3,34.2 V15.2 A6.75,6.75 0 0 1 31.8,15.2 V30.2" fill="none" stroke="#e24e2b" stroke-width="1.05" stroke-linecap="round"/></svg>
<svg style="left:26px;top:418px" width="60" height="60" viewBox="0 0 60 60" ><path d="M7.100000000000001,11.3 V40.55 A15.2,4.1 0 0 0 37.5,40.55 V11.3" fill="#ececec" stroke="#222" stroke-width="1.7"/><path d="M7.100000000000001,34.7 A15.2,4.1 0 0 0 37.5,34.7" fill="none" stroke="#222" stroke-width="1.7"/><path d="M7.100000000000001,28.849999999999998 A15.2,4.1 0 0 0 37.5,28.849999999999998" fill="none" stroke="#222" stroke-width="1.7"/><path d="M7.100000000000001,23.0 A15.2,4.1 0 0 0 37.5,23.0" fill="none" stroke="#222" stroke-width="1.7"/><path d="M7.100000000000001,17.15 A15.2,4.1 0 0 0 37.5,17.15" fill="none" stroke="#222" stroke-width="1.7"/><ellipse cx="22.3" cy="11.3" rx="15.2" ry="4.1" fill="#e24e2b" stroke="#222" stroke-width="1.7"/><path d="M23.4,37.6 V49.6 A15.1,4.0 0 0 0 53.6,49.6 V37.6" fill="#ececec" stroke="#222" stroke-width="1.7"/><path d="M23.4,43.6 A15.1,4.0 0 0 0 53.6,43.6" fill="none" stroke="#222" stroke-width="1.7"/><ellipse cx="38.5" cy="37.6" rx="15.1" ry="4.0" fill="#e24e2b" stroke="#222" stroke-width="1.7"/></svg>
<svg style="left:26px;top:492px" width="60" height="60" viewBox="0 0 60 60" ><path d="M23.2,34.5 V14.3 H53.5 V42.5" fill="none" stroke="#222" stroke-width="1.7" stroke-linejoin="round" stroke-linecap="round"/><path d="M13.8,40.6 H7 V30.5 Q7,22.5 15,22.5 H23.2" fill="none" stroke="#222" stroke-width="1.7" stroke-linejoin="round"/><path d="M11,34.4 V30.2 Q11,26.5 14.8,26.5 H19.5" fill="none" stroke="#222" stroke-width="1.7" stroke-linecap="round"/><path d="M7,44.3 H13.2 M7,40.6 V44.3 M31.3,42.8 H35.6" fill="none" stroke="#222" stroke-width="1.7" stroke-linecap="round"/><circle cx="22.2" cy="43.3" r="5" fill="#e24e2b" stroke="#222" stroke-width="1.7"/><circle cx="44.4" cy="43.3" r="5" fill="#e24e2b" stroke="#222" stroke-width="1.7"/></svg>
<svg style="left:26px;top:568px" width="60" height="60" viewBox="0 0 60 60" ><path d="M7,32.3 Q7,31.5 7.8,31.5 H28.2 V53.6 H7.8 Q7,53.6 7,52.8 Z" fill="#fff" stroke="#222" stroke-width="1.7" stroke-linejoin="round"/><path d="M28.2,8.2 Q28.2,7.4 29,7.4 H52.6 Q53.4,7.4 53.4,8.2 V52.8 Q53.4,53.6 52.6,53.6 H28.2 Z" fill="#fff" stroke="#222" stroke-width="1.7" stroke-linejoin="round"/><rect x="31.3" y="10.6" width="7.2" height="5.8" rx="0.8" fill="#fff" stroke="#222" stroke-width="1.55"/><rect x="31.3" y="19.6" width="7.2" height="5.8" rx="0.8" fill="#fff" stroke="#222" stroke-width="1.55"/><rect x="31.3" y="28.6" width="7.2" height="5.8" rx="0.8" fill="#fff" stroke="#222" stroke-width="1.55"/><rect x="43.3" y="10.6" width="7.2" height="5.8" rx="0.8" fill="#fff" stroke="#222" stroke-width="1.55"/><rect x="43.3" y="19.6" width="7.2" height="5.8" rx="0.8" fill="#fff" stroke="#222" stroke-width="1.55"/><rect x="43.3" y="28.6" width="7.2" height="5.8" rx="0.8" fill="#fff" stroke="#222" stroke-width="1.55"/><rect x="13" y="43.4" width="8.8" height="10.4" fill="#e24e2b" stroke="#222" stroke-width="1.6"/><rect x="37.3" y="43.4" width="7.2" height="10.4" fill="#e24e2b" stroke="#222" stroke-width="1.6"/></svg>
<svg style="left:26px;top:642px" width="60" height="60" viewBox="0 0 60 60" ><path d="M15.7,17.7 L39.7,8.35 V11 L42.6,10.4 V12.6 L44.3,12.9 V45.5 L21.2,53.5 L15.7,47.5 Z" fill="#fff" stroke="#222" stroke-width="1.7" stroke-linejoin="round"/><path d="M15.7,17.7 L21.2,21.55 L44.3,12.9 M21.2,21.55 V53.5 M19.2,20.1 L42.6,11.2" fill="none" stroke="#222" stroke-width="1.7" stroke-linejoin="round"/><path d="M25,28.4 L30,26.4 L33.8,30.9 V42.4 L25,38.4 Z" fill="#fff" stroke="#222" stroke-width="1.5" stroke-linejoin="round"/><path d="M33.8,30.9 L41.4,28.4 V38.4 L33.8,42.4" fill="#fff" stroke="#222" stroke-width="1.5" stroke-linejoin="round"/><path d="M30,26.4 L37,24.4 L41.4,28.4 L33.8,30.9 Z" fill="#e24e2b" stroke="#222" stroke-width="1.5" stroke-linejoin="round"/><path d="M37.5,40.8 V34.8 L39.2,34.3 V39.6" fill="none" stroke="#222" stroke-width="1.4"/><path d="M28.2,33.8 L30.4,34.8 V36.4 L28.2,35.4 Z" fill="#222"/></svg>
<svg style="left:39px;top:724px" width="46" height="54" viewBox="0 0 46 54" ><g transform="scale(0.945)"><path d="M1.3,8.0 Q1.3,6.3 3,6.3 H6 M1.3,8 V48.9 Q1.3,50.6 3,50.6 H32.8 Q34.5,50.6 34.5,48.9 V47" fill="#fff" stroke="#222" stroke-width="1.75" stroke-linejoin="round"/><path d="M4.5,4.6 Q4.5,2.9 6.2,2.9 H8 M4.5,4.6 V45.2 Q4.5,46.9 6.2,46.9 H36.3 Q38,46.9 38,45.2 V43.8" fill="#fff" stroke="#222" stroke-width="1.75" stroke-linejoin="round"/><path d="M7.8,2.9 Q7.8,1.2 9.5,1.2 H29.7 L41.1,11.9 V42 Q41.1,43.7 39.4,43.7 H9.5 Q7.8,43.7 7.8,42 Z" fill="#fff" stroke="#222" stroke-width="1.75" stroke-linejoin="round"/><path d="M29.7,1.2 V11.9 H41.1" fill="#fff" stroke="#222" stroke-width="1.75" stroke-linejoin="round"/><rect x="14.6" y="17.6" width="18.8" height="10.8" fill="none" stroke="#e24e2b" stroke-width="1.5"/><path d="M14.5,32.9 H33.5 M14.5,37.9 H33.5" stroke="#e24e2b" stroke-width="1.5"/></g></svg>
<svg style="left:26.4px;top:1281.4px" width="60" height="60" viewBox="0 0 60 60" ><circle cx="30" cy="30" r="23.5" fill="none" stroke="#111" stroke-width="1.5"/><path d="M23.8,25.8 Q23.6,19.2 31,19.2 Q37.9,19.2 37.9,25 Q37.9,28.6 34.2,30.8 Q30,32.8 30,36 V38.2" fill="none" stroke="#e24e2b" stroke-width="4.1"/><rect x="27.7" y="41" width="4.6" height="4.5" fill="#e24e2b"/></svg>
<svg style="left:25.799999999999997px;top:1356.3px" width="60" height="60" viewBox="0 0 60 60" ><path d="M24.60,12.20 L24.60,6.80 L35.40,6.80 L35.40,12.20 A18.6,18.6 0 0 1 42.71,16.42 L47.39,13.72 L52.79,23.08 L48.11,25.78 A18.6,18.6 0 0 1 48.11,34.22 L52.79,36.92 L47.39,46.28 L42.71,43.58 A18.6,18.6 0 0 1 35.40,47.80 L35.40,53.20 L24.60,53.20 L24.60,47.80 A18.6,18.6 0 0 1 17.29,43.58 L12.61,46.28 L7.21,36.92 L11.89,34.22 A18.6,18.6 0 0 1 11.89,25.78 L7.21,23.08 L12.61,13.72 L17.29,16.42 A18.6,18.6 0 0 1 24.60,12.20 Z" fill="#fff" stroke="#2a2a2a" stroke-width="1.5" stroke-linejoin="miter"/><circle cx="30.3" cy="30.6" r="9.7" fill="none" stroke="#e24e2b" stroke-width="1.2"/></svg>
<svg style="left:0px;top:1400px" width="120" height="99" viewBox="0 0 120 99" ><path d="M36.2,43.5 L54,61.3 L36.2,79.2 M53.7,43.5 L71.5,61.3 L53.7,79.2" fill="none" stroke="#222" stroke-width="1.6"/></svg>
</body></html>
